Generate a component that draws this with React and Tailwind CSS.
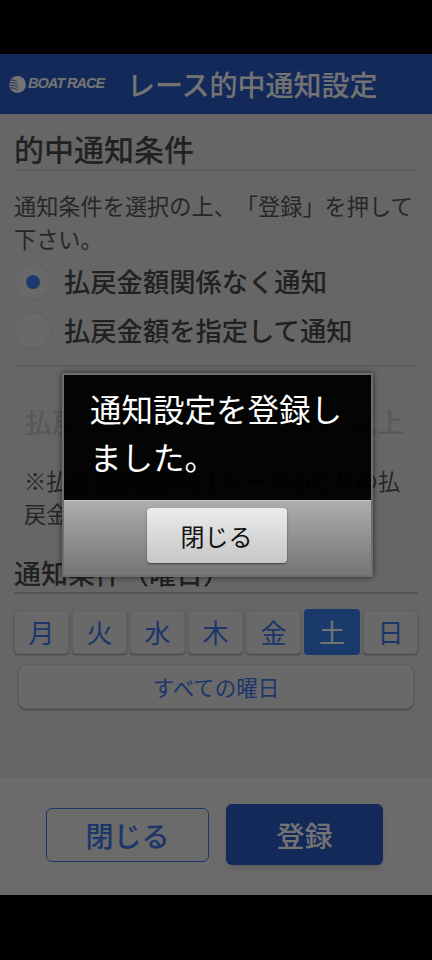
const days = ['月', '火', '水', '木', '金', '土', '日']

const Radio = ({ checked, label }) => (
  <div className="flex items-center h-[49px]">
    <div className="w-[37px] h-[37px] rounded-full border border-[#d6d6d6] bg-[#e9e9e9] flex items-center justify-center">
      {checked && <div className="w-[14px] h-[14px] rounded-full bg-[#3e83f0]" />}
    </div>
    <span className="ml-[13px] text-[26.300px] font-medium text-[#4a4a4a] leading-none">{label}</span>
  </div>
)

const Logo = () => (
  <div className="flex items-center w-[127px] pl-[9px] shrink-0">
    <svg width="17" height="17" viewBox="0 0 17 17" className="shrink-0">
      <circle cx="8.500" cy="8.500" r="8.500" fill="#fff" />
      <path d="M0 4.500c3-1 6-.5 8 1.500M0 7c3-.8 6-.3 8.500 1.500M0 9.500c3-.6 6 0 9 2M1 12c2.500-.4 5 .2 7.500 2" stroke="#2c5bc8" strokeWidth="0.9" fill="none" />
    </svg>
    <span className="ml-[2px] text-[14.500px] font-bold italic text-white tracking-[-1px] whitespace-nowrap font-['Liberation_Sans',sans-serif]">BOAT RACE</span>
  </div>
)

const App = () => {
  return (
    <div className="relative w-[432px] h-[960px] bg-black pt-[54px] pb-[65px] overflow-hidden font-['Noto_Sans_CJK_JP','Noto_Sans',sans-serif] [text-spacing-trim:space-all]">
      <div className="h-full flex flex-col bg-[#e3e3e3]">
        <header className="h-[60px] shrink-0 flex items-center bg-[#2c5bc8]">
          <Logo />
          <h1 className="text-[28px] font-medium text-white leading-none whitespace-nowrap">レース的中通知設定</h1>
        </header>

        <main className="flex-1 px-[14px]">
          <h2 className="mt-[14px] text-[30px] leading-[41px] font-medium text-[#4a4a4a] border-b-2 border-[#cfcfcf]">的中通知条件</h2>
          <p className="mt-[18px] text-[22.200px] leading-[33px] text-[#555]">通知条件を選択の上、「登録」を押して下さい。</p>
          <div className="mt-[2px]">
            <Radio checked label="払戻金額関係なく通知" />
            <Radio label="払戻金額を指定して通知" />
          </div>
          <div className="mt-[10px] border-b-2 border-[#cfcfcf]" />

          <div className="mt-[25px] pl-[11px] pr-[14px] flex items-center justify-between h-[60px] text-[27px] text-[#c4c4c4] font-medium">
            <span>払戻金額合計</span>
            <span className="w-[52px] h-[60px] border border-[#cdcdcd] rounded" />
            <span>00円以上</span>
          </div>
          <p className="mt-[12px] px-[10px] text-[22.200px] leading-[33px] text-[#555]">※払戻金額合計は１レースあたりの払戻金額です。</p>

          <h2 className="mt-[24px] text-[27px] leading-[38px] font-medium text-[#4a4a4a] border-b-2 border-[#bdbdbd]">通知条件（曜日）</h2>
          <div className="mt-[16px] flex justify-between">
            {days.map((d) => (
              <button
                key={d}
                className={d === '土'
                  ? 'w-[56px] h-[46px] -my-[1px] rounded bg-[#3a80f0] text-white text-[26px] leading-none'
                  : 'w-[55px] h-[44px] rounded border border-[#d8d8d8] bg-[#e8e8e8] text-[#3e78e8] text-[26px] leading-none shadow-[0_1px_2px_rgba(0,0,0,0.35)]'}
              >
                {d}
              </button>
            ))}
          </div>
          <button className="mt-[10px] mx-[4px] w-[396px] h-[45px] rounded-lg border border-[#d4d4d4] bg-[#e8e8e8] text-[#3e78e8] text-[21.500px] leading-none shadow-[0_1px_2px_rgba(0,0,0,0.35)]">
            すべての曜日
          </button>
        </main>

        <footer className="h-[117px] shrink-0 bg-[#ededed] flex items-start pl-[46px] pt-[26px] gap-[17px]">
          <button className="w-[163px] h-[54px] mt-[4px] rounded-md border border-[#3e78e8] text-[#3e78e8] text-[28px] leading-none font-medium">閉じる</button>
          <button className="w-[157px] h-[61px] rounded-md bg-[#2c5bc8] text-white text-[28px] leading-none font-medium shadow-md">登録</button>
        </footer>
      </div>

      {/* dim layer + dialog */}
      <div className="absolute inset-0 bg-black/55">
        <div className="absolute left-[62px] top-[373px] w-[311px] h-[204px] flex flex-col border-2 border-[#6e6e6e] shadow-[0_0_6px_rgba(0,0,0,0.6)]">
          <div className="h-[126px] shrink-0 bg-black/[.96] pl-[26px] pr-[16px] pt-[9px] border-b border-[#c8c8c8] text-[31.500px] leading-[48px] text-white">
            通知設定を登録しました。
          </div>
          <div className="flex-1 flex justify-center pt-[7px] bg-gradient-to-b from-[#adadad] to-[#757575]">
            <button className="w-[140px] h-[55px] -ml-[2px] rounded-sm bg-gradient-to-b from-[#ececec] to-[#c6c6c6] text-[24px] leading-none text-[#111] shadow-[0_1px_2px_rgba(0,0,0,0.5)]">閉じる</button>
          </div>
        </div>
      </div>
    </div>
  )
}

export default App
